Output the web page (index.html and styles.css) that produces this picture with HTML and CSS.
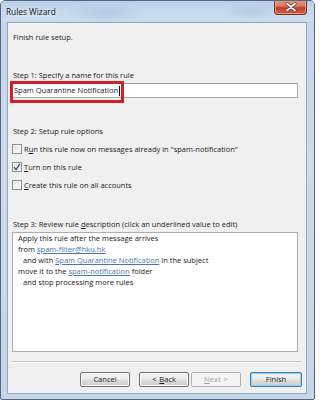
FILE: index.html
```html
<!DOCTYPE html>
<html>
<head>
<meta charset="utf-8">
<link rel="stylesheet" href="styles.css">
</head>
<body>
<div class="window">
  <div class="titlebar">
    <span class="title">Rules Wizard</span>
    <div class="close">
      <svg width="12" height="10" viewBox="0 0 12 10">
        <path d="M2 1.5 L10 8.5 M10 1.5 L2 8.5" stroke="#6b2a20" stroke-width="3.2" stroke-linecap="round"/>
        <path d="M2 1.5 L10 8.5 M10 1.5 L2 8.5" stroke="#ffffff" stroke-width="1.8" stroke-linecap="round"/>
      </svg>
    </div>
  </div>
  <div class="client">
    <div class="panel">
      <p class="intro">Finish rule setup.</p>

      <div class="label step1">Step 1: Specify a name for this rule</div>
      <div class="name-wrap">
        <div class="field"><span>Spam Quarantine Notification</span><span class="caret"></span></div>
        <div class="highlight"></div>
      </div>

      <div class="label step2">Step 2: Setup rule options</div>
      <div class="options">
        <div class="option"><span class="box"></span><span>R<u>u</u>n this rule now on messages already in "spam-notification"</span></div>
        <div class="option"><span class="box checked"><svg width="8" height="8" viewBox="0 0 8 8"><path d="M1 4.2 L3 6.6 L7 0.8" fill="none" stroke="#3b4e6e" stroke-width="1.3"/></svg></span><span><u>T</u>urn on this rule</span></div>
        <div class="option"><span class="box"></span><span><u>C</u>reate this rule on all accounts</span></div>
      </div>

      <div class="label step3">Step 3: Review rule <u>d</u>escription (click an underlined value to edit)</div>
      <div class="desc">
        <div>Apply this rule after the message arrives</div>
        <div>from <a class="link">spam-filter@hku.hk</a></div>
        <div class="indent">and with <a class="link">Spam Quarantine Notification</a> in the subject</div>
        <div>move it to the <a class="link">spam-notification</a> folder</div>
        <div class="indent">and stop processing more rules</div>
      </div>

      <div class="separator"></div>

      <div class="buttons">
        <div class="btn">Cancel</div>
        <div class="btn back"><span class="lt">&lt;</span><u>B</u>ack</div>
        <div class="btn disabled"><u>N</u>ext<span class="gt">&gt;</span></div>
        <div class="btn default">Finish</div>
      </div>
    </div>
  </div>
</div>
</body>
</html>
```

FILE: styles.css
```css
* { box-sizing: border-box; }
html, body { margin: 0; padding: 0; background: #ffffff; }
body {
  font-family: "Open Sans", "Noto Sans", sans-serif;
  font-size: 7.5px;
  color: #1a1a1a;
}
.window {
  width: 315px;
  height: 400px;
  border: 1px solid #56677c;
  border-radius: 5px 5px 2px 2px;
  background: linear-gradient(180deg, #c4d6ec 0%, #cddbec 40%, #c6d6ea 100%);
  display: flex;
  flex-direction: column;
  overflow: hidden;
}
.titlebar {
  height: 20px;
  display: flex;
  align-items: flex-start;
  padding-left: 5px;
  background:
    radial-gradient(ellipse 40px 10px at 105px 12px, rgba(150,170,195,0.35), transparent),
    radial-gradient(ellipse 30px 8px at 250px 11px, rgba(150,170,195,0.35), transparent),
    linear-gradient(180deg, #b9cfea 0%, #c9dbf0 60%, #cddcee 100%);
}
.title {
  font-size: 8.3px;
  line-height: 21px;
  color: #151515;
  text-shadow: 0 0 4px rgba(255,255,255,0.9);
}
.close {
  margin-left: auto;
  margin-right: 7px;
  margin-top: -1px;
  width: 33px;
  height: 15px;
  border: 1px solid #7a3325;
  border-top: none;
  border-radius: 0 0 4px 4px;
  background: linear-gradient(180deg, #e79c8a 0%, #d7755f 45%, #c2402a 55%, #cd6246 100%);
  box-shadow: inset 0 0 0 1px rgba(255,200,190,0.5);
  display: flex;
  align-items: center;
  justify-content: center;
}
.client {
  flex: 1;
  display: flex;
  padding: 1px 7px 5px 6px;
}
.panel {
  flex: 1;
  background: #f0f0f0;
  border: 1px solid #97a7bc;
  padding: 9px 4px 6px 4px;
  display: flex;
  flex-direction: column;
}
.intro {
  margin: 0 0 0 1px;
  line-height: 11px;
}
.label {
  margin-left: 1px;
  line-height: 11px;
}
.step1 { margin-top: 27px; }
.name-wrap {
  position: relative;
  margin-top: 2px;
  margin-right: 4px;
}
.field {
  height: 15px;
  margin-left: -1px;
  background: #ffffff;
  border: 1px solid #abadb3;
  border-top-color: #9fa2a9;
  display: flex;
  align-items: center;
  padding-left: 2px;
  line-height: 11px;
}
.caret {
  display: inline-block;
  width: 1px;
  height: 10px;
  background: #000;
  margin-left: 1px;
}
.highlight {
  position: absolute;
  left: -2px;
  top: -2px;
  width: 114px;
  height: 22px;
  border: 3px solid #d31f2b;
}
.step2 { margin-top: 28px; }
.options {
  margin-top: 3px;
  display: flex;
  flex-direction: column;
}
.option {
  height: 18px;
  display: flex;
  align-items: center;
  gap: 2px;
  line-height: 11px;
}
.box {
  width: 10px;
  height: 10px;
  border: 1px solid #8e8f8f;
  background: linear-gradient(135deg, #e0e0e0 0%, #f2f2f2 60%, #fbfbfb 100%);
  box-shadow: inset 0 0 0 1px #f6f6f6;
  display: flex;
  align-items: center;
  justify-content: center;
}
.step3 { margin-top: 25px; }
.desc {
  margin-top: 2px;
  margin-right: 4px;
  height: 120px;
  background: #ffffff;
  border: 1px solid #abadb3;
  padding: 0 5px;
  line-height: 11px;
}
.indent { padding-left: 5px; }
.link {
  color: #4a78ae;
  text-decoration: underline;
}
.separator {
  margin-top: 9px;
  height: 2px;
  border-top: 1px solid #c3c6cb;
  border-bottom: 1px solid #ffffff;
}
.buttons {
  margin-top: 9px;
  display: flex;
  justify-content: flex-end;
}
.btn {
  width: 50px;
  height: 15px;
  margin-left: 9px;
  border: 1px solid #707070;
  border-radius: 2px;
  background: linear-gradient(180deg, #f3f3f3 0%, #ebebeb 48%, #dddddd 52%, #cfcfcf 100%);
  box-shadow: inset 0 0 0 1px #fbfbfb;
  display: flex;
  align-items: center;
  justify-content: center;
  line-height: 11px;
  color: #1e1e1e;
}
.lt { margin-right: 3px; }
.gt { margin-left: 3px; }
.btn.disabled {
  margin-left: 2px;
  border-color: #adb2b5;
  background: #f4f4f4;
  box-shadow: none;
  color: #a3a3a3;
}
.btn.default {
  width: 52px;
  border-color: #3c7fb1;
  background: linear-gradient(180deg, #f3f3f3 0%, #ebebeb 48%, #dddddd 52%, #cfcfcf 100%);
  box-shadow: inset 0 0 0 1px #8fd0ee;
}
```
